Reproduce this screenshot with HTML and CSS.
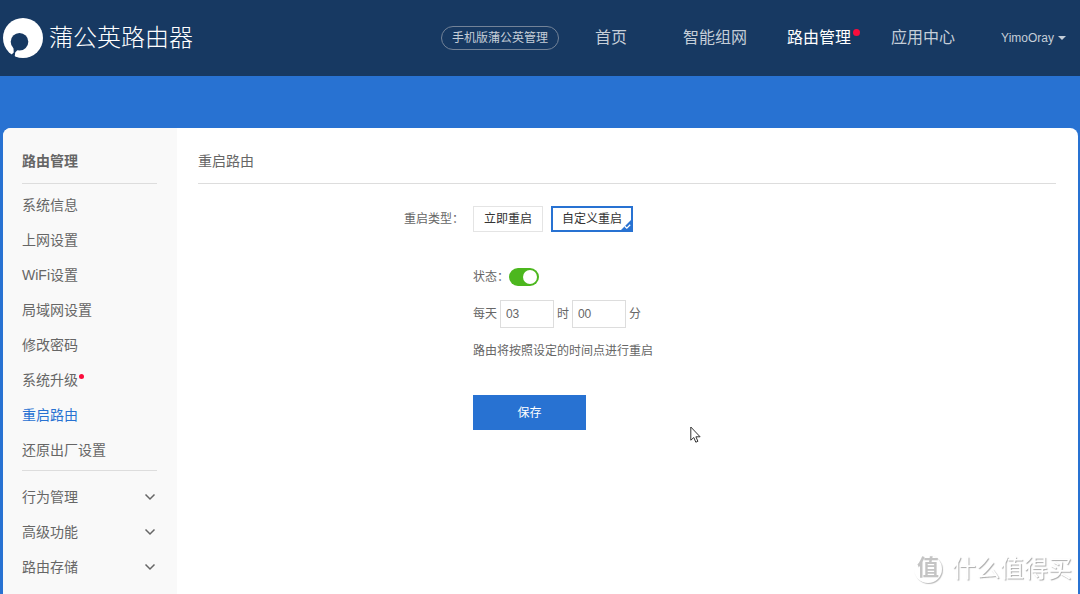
FILE: index.html
```
<!DOCTYPE html>
<html lang="zh-CN">
<head>
<meta charset="utf-8">
<meta name="viewport" content="width=device-width, initial-scale=1">
<title>蒲公英路由器</title>
<link rel="stylesheet" href="styles.css">
</head>
<body>
<header class="topbar">
  <a class="brand" href="#">
    <svg class="brand-mark" viewBox="0 0 40 40" aria-hidden="true">
      <circle cx="20" cy="20" r="20" fill="#fff"/>
      <circle cx="16.500" cy="23.700" r="8.800" fill="#173962"/>
      <path fill="#173962" d="M7.500 37.500 10.700 34.500 10.500 29 15 31.500 12.200 34.500 11.500 40z"/>
    </svg>
    <span class="brand-name">蒲公英路由器</span>
  </a>
  <nav class="nav">
    <a class="pill" href="#">手机版蒲公英管理</a>
    <a class="nav-home" href="#">首页</a>
    <a class="nav-net" href="#">智能组网</a>
    <a class="nav-link active has-dot" href="#">路由管理</a>
    <a class="nav-link" href="#">应用中心</a>
    <button class="user" type="button">YimoOray<span class="caret"></span></button>
  </nav>
</header>

<div class="panel">
  <aside class="sidebar">
    <h2 class="side-title">路由管理</h2>
    <ul class="menu">
      <li><a href="#">系统信息</a></li>
      <li><a href="#">上网设置</a></li>
      <li><a href="#">WiFi设置</a></li>
      <li><a href="#">局域网设置</a></li>
      <li><a href="#">修改密码</a></li>
      <li><a class="has-dot small-dot" href="#">系统升级</a></li>
      <li><a class="current" href="#">重启路由</a></li>
      <li><a href="#">还原出厂设置</a></li>
    </ul>
    <div class="groups">
      <button class="group" type="button">行为管理<svg class="chevron" viewBox="0 0 12 8"><path d="M1.500 1.500 6 6l4.500-4.500"/></svg></button>
      <button class="group" type="button">高级功能<svg class="chevron" viewBox="0 0 12 8"><path d="M1.500 1.500 6 6l4.500-4.500"/></svg></button>
      <button class="group" type="button">路由存储<svg class="chevron" viewBox="0 0 12 8"><path d="M1.500 1.500 6 6l4.500-4.500"/></svg></button>
    </div>
  </aside>

  <main class="content">
    <h1 class="page-title">重启路由</h1>
    <form class="form">
      <span class="form-label" id="type-label">重启类型：</span>
      <div class="options" role="radiogroup" aria-labelledby="type-label">
        <label class="option"><input class="hidden-input" type="radio" name="type">立即重启</label>
        <label class="option selected"><input class="hidden-input" type="radio" name="type" checked>自定义重启
          <svg class="tick" viewBox="0 0 10 10" aria-hidden="true"><path fill="#2872d2" d="M10 0v10H0z"/><path fill="none" stroke="#fff" stroke-width="1.300" d="M3.800 6.300 5.800 8.200 9.200 4.700"/></svg>
        </label>
      </div>
      <div class="fields">
        <div class="status">
          <label for="status">状态：</label>
          <input class="switch" id="status" type="checkbox" role="switch" checked>
        </div>
        <div class="time">
          <label for="hour">每天</label>
          <input class="time-input" id="hour" type="text" value="03">
          <label for="minute">时</label>
          <input class="time-input" id="minute" type="text" value="00">
          <span>分</span>
        </div>
        <p class="hint">路由将按照设定的时间点进行重启</p>
        <button class="save" type="button">保存</button>
      </div>
    </form>
  </main>
</div>

<svg class="cursor" viewBox="0 0 12 18" aria-hidden="true"><path fill="#fff" stroke="#333" d="M.8 1v13.200l3-2.700 2 4.700 2.100-.9-2-4.500h4.200z"/></svg>
<div class="watermark"><span class="watermark-badge">值</span><span>什么值得买</span></div>
</body>
</html>
```

FILE: styles.css
```
* { box-sizing: border-box; }

body {
  margin: 0;
  min-height: 100vh;
  display: flex;
  flex-direction: column;
  background: #2872d2;
  color: #666;
  font: 12px/16px "Liberation Sans", "Noto Sans CJK SC", sans-serif;
}

a { color: inherit; text-decoration: none; }
button, input { font: inherit; color: inherit; }
button { border: 0; padding: 0; background: none; cursor: pointer; }
h1, h2, p, ul { margin: 0; padding: 0; }
ul { list-style: none; }

.topbar {
  height: 76px;
  padding: 0 14px 0 3px;
  display: flex;
  align-items: center;
  justify-content: space-between;
  background: #173962;
  color: #c5ced8;
  white-space: nowrap;
}

.brand { display: flex; align-items: center; gap: 6px; color: #fff; }
.brand-mark { width: 40px; height: 40px; }
.brand-name { font-size: 24px; line-height: 32px; font-weight: 300; }

.nav { display: flex; align-items: center; font-size: 16px; line-height: 24px; }
.pill {
  height: 24px;
  margin-right: 36px;
  padding: 0 10px;
  border: 1px solid #738398;
  border-radius: 12px;
  font-size: 12px;
  line-height: 22px;
}
.nav-home { margin-right: 56px; }
.nav-net { margin-right: 40px; }
.nav-link { margin-right: 40px; }
.active { color: #fff; }
.user { display: flex; align-items: center; gap: 4px; margin-left: 6px; font-size: 12px; }
.caret { border: 4px solid transparent; border-top-color: #c5ced8; border-bottom: 0; }

.has-dot { position: relative; }
.has-dot::after {
  content: "";
  position: absolute;
  top: 3px;
  right: -9px;
  width: 7px;
  height: 7px;
  border-radius: 50%;
  background: #fb0d3c;
}
.small-dot::after { top: 4px; right: -6px; width: 5px; height: 5px; }

.panel {
  flex: 1;
  display: flex;
  margin: 52px 2px 0 3px;
  border-radius: 8px 8px 0 0;
  overflow: hidden;
  background: #fff;
}

.sidebar {
  flex: none;
  width: 174px;
  padding: 0 20px 8px 19px;
  background: #f9f9f9;
  font-size: 14px;
  line-height: 20px;
}
.side-title { padding: 23px 0 12px; border-bottom: 1px solid #ddd; font-size: 14px; line-height: 20px; }
.menu { padding: 3px 0; border-bottom: 1px solid #ddd; }
.menu li { height: 35px; display: flex; align-items: center; }
.current { color: #2872d2; }
.groups { padding-top: 8px; }
.group { width: 100%; height: 35px; padding-right: 1px; display: flex; align-items: center; justify-content: space-between; }
.chevron { width: 12px; height: 8px; fill: none; stroke: #666; stroke-width: 1.5; }

.content { flex: 1; padding: 0 22px 0 21px; }
.page-title { padding: 23px 0 12px; border-bottom: 1px solid #ddd; font-size: 14px; line-height: 20px; font-weight: 400; }
.form {
  display: grid;
  grid-template-columns: 69px 1fr;
  row-gap: 36px;
  padding: 22px 0 0 24%;
}
.form-label { line-height: 26px; white-space: nowrap; }
.options { display: flex; gap: 8px; }
.option {
  position: relative;
  height: 26px;
  padding: 0 10px;
  border: 1px solid #e4e4e4;
  color: #333;
  line-height: 24px;
  cursor: pointer;
}
.selected { padding: 0 9px; border: 2px solid #2872d2; line-height: 22px; }
.hidden-input { position: absolute; opacity: 0; margin: 0; }
.tick { position: absolute; right: 0; bottom: 0; width: 10px; height: 10px; }

.fields { grid-column: 2; display: flex; flex-direction: column; align-items: flex-start; }
.status { display: flex; align-items: center; height: 18px; }
.switch {
  appearance: none;
  display: flex;
  align-items: center;
  justify-content: flex-end;
  width: 30px;
  height: 18px;
  margin: 0;
  padding: 2px;
  border-radius: 9px;
  background: #4cb71e;
}
.switch::before { content: ""; width: 14px; height: 14px; border-radius: 50%; background: #fff; }
.time { display: flex; align-items: center; gap: 3px; margin-top: 14px; }
.time-input { width: 54px; height: 28px; padding: 0 5px; border: 1px solid #ddd; background: #fff; }
.hint { margin-top: 15px; }
.save { width: 113px; height: 35px; margin-top: 36px; background: #2872d2; color: #fff; }

.cursor { position: absolute; left: 690px; top: 426px; width: 12px; height: 18px; }
.watermark {
  position: fixed;
  right: 8px;
  bottom: 9px;
  display: flex;
  align-items: center;
  gap: 10px;
  color: #fff;
  font-size: 24px;
  line-height: 32px;
  text-shadow: 1px 1px 1px #aaa;
  pointer-events: none;
}
.watermark-badge {
  width: 28px;
  height: 28px;
  border-radius: 50%;
  box-shadow: 1px 1px 1px #bbb;
  color: #c4c4c4;
  font-size: 22px;
  font-weight: 700;
  line-height: 26px;
  text-align: center;
  text-shadow: none;
}
```
